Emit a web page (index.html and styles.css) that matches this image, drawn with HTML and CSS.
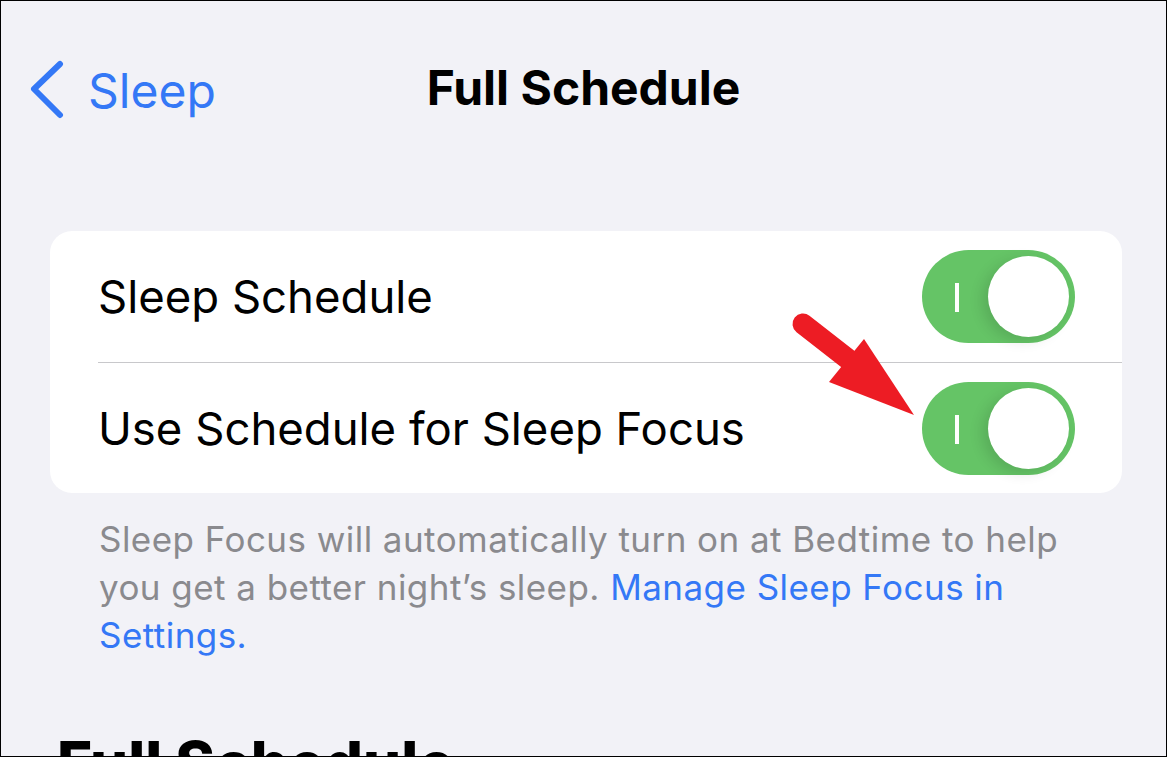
FILE: index.html
```html
<!DOCTYPE html>
<html lang="en">
<head>
  <meta charset="UTF-8">
  <title>Full Schedule</title>
  <link rel="stylesheet" href="styles.css">
</head>
<body>
  <div class="screen">
    <div class="nav">
      <a class="back" href="#">
        <svg class="chevron" width="40" height="60" viewBox="0 0 40 60">
          <path d="M31 4 L5 29 L31 55" fill="none" stroke="#3478f6" stroke-width="6" stroke-linecap="round" stroke-linejoin="round"/>
        </svg>
        <span>Sleep</span>
      </a>
      <div class="title">Full Schedule</div>
    </div>

    <div class="card">
      <div class="row">
        <span class="label">Sleep Schedule</span>
        <div class="toggle"><span class="mark"></span><span class="knob"></span></div>
      </div>
      <div class="row">
        <span class="label">Use Schedule for Sleep Focus</span>
        <div class="toggle"><span class="mark"></span><span class="knob"></span></div>
      </div>
    </div>

    <p class="footnote">Sleep Focus will automatically turn on at Bedtime to help you get a better night’s sleep. <a href="#">Manage Sleep Focus in Settings.</a></p>

    <h2 class="section">Full Schedule</h2>

    <!-- annotation arrow -->
    <svg class="arrow" width="140" height="120" viewBox="0 0 140 120">
      <line x1="22" y1="23" x2="72" y2="62" stroke="#ed1c24" stroke-width="21" stroke-linecap="round"/>
      <polygon points="83,38 48,81 133,114" fill="#ed1c24"/>
    </svg>
  </div>
</body>
</html>
```

FILE: styles.css
```css
* {
  box-sizing: border-box;
}

body {
  margin: 0;
  font-family: Inter, "Noto Sans", sans-serif;
  color: #000;
}

.screen {
  position: relative;
  width: 1167px;
  height: 757px;
  overflow: hidden;
  background-color: #f2f2f7;
  border: 1px solid #000;
}

.nav {
  position: relative;
  height: 178px;
  display: flex;
  align-items: flex-start;
  padding-top: 58px;
}

.back {
  display: flex;
  align-items: center;
  gap: 19px;
  padding-left: 28px;
  color: #3478f6;
  text-decoration: none;
  font-size: 48px;
  height: 62px;
}

.chevron {
  flex: none;
}

.title {
  position: absolute;
  left: 0;
  right: 0;
  top: 56px;
  text-align: center;
  font-size: 48px;
  font-weight: 700;
  line-height: 62px;
  pointer-events: none;
}

.card {
  margin: 52px 44px 0 49px;
  background-color: #fff;
  border-radius: 22px;
  overflow: hidden;
}

.row {
  display: flex;
  align-items: center;
  justify-content: space-between;
  height: 131px;
  margin-left: 48px;
  padding-right: 47px;
}

.row + .row {
  border-top: 1px solid #c8c8cb;
}

.label {
  font-size: 45.5px;
}

.toggle {
  position: relative;
  width: 153px;
  height: 93px;
  border-radius: 47px;
  background-color: #65c466;
}

.mark {
  position: absolute;
  left: 33px;
  top: 33px;
  width: 4px;
  height: 29px;
  background-color: #fff;
}

.knob {
  position: absolute;
  right: 6px;
  top: 6px;
  width: 81px;
  height: 81px;
  border-radius: 50%;
  background-color: #fff;
  box-shadow: -6px 4px 14px rgba(0, 0, 0, 0.12);
}

.footnote {
  margin: 22px 95px 0 98px;
  font-size: 35px;
  letter-spacing: 0.45px;
  line-height: 48px;
  color: #8a8a8e;
}

.footnote a {
  color: #3478f6;
  text-decoration: none;
}

.section {
  margin: 64px 0 0 56px;
  font-size: 60px;
  font-weight: 800;
  line-height: 80px;
}

.arrow {
  position: absolute;
  left: 780px;
  top: 300px;
}
```
